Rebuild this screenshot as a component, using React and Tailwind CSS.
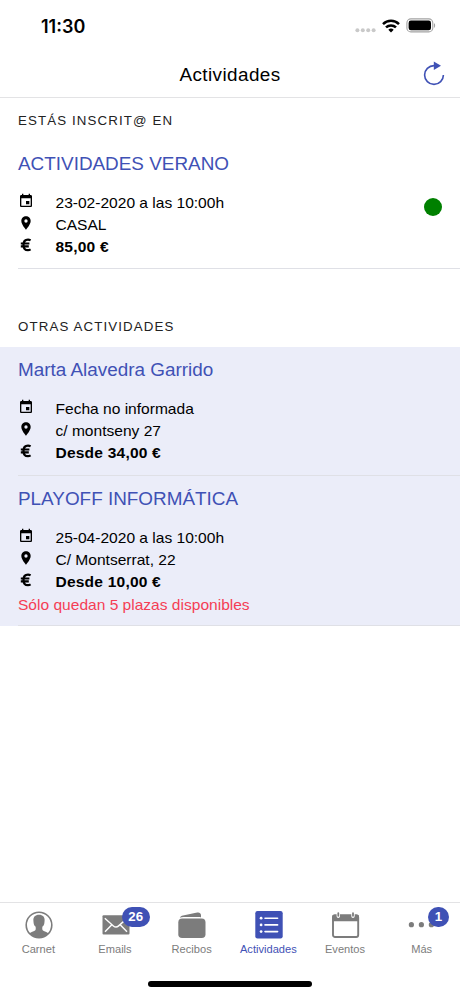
import clsx from 'clsx'

const enrolled = [
  { title: 'ACTIVIDADES VERANO', date: '23-02-2020 a las 10:00h', place: 'CASAL', price: '85,00 €', active: true },
]

const others = [
  { title: 'Marta Alavedra Garrido', date: 'Fecha no informada', place: 'c/ montseny 27', price: 'Desde 34,00 €' },
  {
    title: 'PLAYOFF INFORMÁTICA',
    date: '25-04-2020 a las 10:00h',
    place: 'C/ Montserrat, 22',
    price: 'Desde 10,00 €',
    warning: 'Sólo quedan 5 plazas disponibles',
  },
]

const tabs = [
  { label: 'Carnet', Icon: ContactIcon },
  { label: 'Emails', Icon: MailIcon, badge: '26' },
  { label: 'Recibos', Icon: WalletIcon },
  { label: 'Actividades', Icon: ListIcon, selected: true },
  { label: 'Eventos', Icon: CalendarIcon },
  { label: 'Más', Icon: MoreIcon, badge: '1' },
]

function ContactIcon() {
  return (
    <svg width="28" height="28" viewBox="0 0 28 28">
      <circle cx="14" cy="14" r="12.8" fill="none" stroke="currentColor" strokeWidth="1.6" />
      <path
        d="M14 3.8c-3.8 0-5.9 2.3-5.6 5.8.1 1.2.1 1.9.3 2.8.3 1.5 1 2.5 1.8 3.2.3 1 .4 2.2.1 3.1-.6 1.5-3.9 1.7-6.1 3.7A13 13 0 0 0 14 27a13 13 0 0 0 9.5-4.6c-2.2-2-5.5-2.2-6.1-3.7-.3-.9-.2-2.1.1-3.1.8-.7 1.5-1.7 1.8-3.2.2-.9.2-1.6.3-2.8.3-3.5-1.8-5.8-5.6-5.8z"
        fill="currentColor"
      />
    </svg>
  )
}

function MailIcon() {
  return (
    <svg width="28" height="28" viewBox="0 0 28 28">
      <rect x="0.5" y="4.3" width="27" height="19.2" rx="1" fill="currentColor" />
      <path
        d="M2.8 7.2l8.6 7.7c1.6 1.4 3.6 1.4 5.2 0l8.6-7.7M3 20.8l6.6-6.9M25 20.8l-6.6-6.9"
        fill="none"
        stroke="#fff"
        strokeWidth="1.4"
      />
    </svg>
  )
}

function WalletIcon() {
  return (
    <svg width="28" height="28" viewBox="0 0 28 28" fill="currentColor">
      <rect x="0.3" y="7.6" width="27.2" height="19.4" rx="3.8" />
      <path d="M1.8 6.7c.6-1.3 1.6-2 3.2-2.3l14.2-2.8c2.1-.4 3.6.5 3.8 2.4v2.4c-.5-.3-1.2-.4-2-.4H5.6c-1.5 0-2.7.2-3.8.7z" />
    </svg>
  )
}

function ListIcon() {
  return (
    <svg width="28" height="28" viewBox="0 0 28 28">
      <rect x="0.3" y="0.1" width="27.4" height="27.4" rx="2.2" fill="currentColor" />
      <g fill="#fff">
        <circle cx="6.1" cy="7.2" r="1.4" />
        <circle cx="6.1" cy="13.9" r="1.4" />
        <circle cx="6.1" cy="20.6" r="1.4" />
      </g>
      <path d="M10 7.2h12.6M10 13.9h12.6M10 20.6h12.6" stroke="#fff" strokeWidth="1.6" strokeLinecap="round" />
    </svg>
  )
}

function CalendarIcon() {
  return (
    <svg width="28" height="28" viewBox="0 0 28 28">
      <rect x="1" y="4.4" width="25.2" height="21.6" rx="2" fill="none" stroke="currentColor" strokeWidth="1.9" />
      <path d="M.2 10.3V5.8c0-1.3.8-2.2 2.2-2.2h22.4c1.4 0 2.2.9 2.2 2.2v4.5z" fill="currentColor" />
      <path d="M6.3 1.6v3.6M21 1.6v3.6" stroke="#fff" strokeWidth="3.4" strokeLinecap="round" />
      <path d="M6.3 2.2v2.6M21 2.2v2.6" stroke="currentColor" strokeWidth="1.8" strokeLinecap="round" />
    </svg>
  )
}

function MoreIcon() {
  return (
    <svg width="28" height="28" viewBox="0 0 28 28" fill="currentColor">
      <circle cx="3.4" cy="13.7" r="2.6" />
      <circle cx="13.4" cy="13.7" r="2.6" />
      <circle cx="23.4" cy="13.7" r="2.6" />
    </svg>
  )
}

function EventIcon() {
  return (
    <svg width="16" height="16" viewBox="0 0 24 24" className="-mt-[4px]">
      <path d="M17 12h-5v5h5v-5zM16 1v2H8V1H6v2H5c-1.11 0-2 .9-2 2v14c0 1.1.89 2 2 2h14c1.1 0 2-.9 2-2V5c0-1.1-.9-2-2-2h-1V1h-2zm3 18H5V8h14v11z" />
    </svg>
  )
}

function PinIcon() {
  return (
    <svg width="16" height="16" viewBox="0 0 24 24" className="-mt-[4px]">
      <path d="M12 2C8.13 2 5 5.13 5 9c0 5.25 7 13 7 13s7-7.75 7-13c0-3.87-3.13-7-7-7zm0 9.5a2.5 2.5 0 1 1 0-5 2.5 2.5 0 0 1 0 5z" />
    </svg>
  )
}

function EuroIcon() {
  return (
    <svg width="16" height="16" viewBox="0 0 16 16" className="-mt-[4px]">
      <path
        d="M12.6 3.4c-.8-.5-1.7-.8-2.6-.8-2.8 0-4.5 2.1-4.5 5.3s1.7 5.3 4.5 5.3c.9 0 1.8-.3 2.6-.8M2.8 6.5h8.6M2.8 9.4h8"
        fill="none"
        stroke="#000"
        strokeWidth="2.2"
      />
    </svg>
  )
}

function Row({ icon, children }) {
  return (
    <div className="flex h-[22.2px] items-center">
      <span className="flex w-[37.5px] shrink-0">{icon}</span>
      <span>{children}</span>
    </div>
  )
}

function Activity({ item }) {
  return (
    <li className="ml-[18px] border-b border-[#dfe0e6] pt-[11px] pb-[10px] not-last:pb-[11px]">
      <h2 className="mb-[16.5px] text-[18.9px] leading-[23px] text-[#3f51b5]">{item.title}</h2>
      <div className="flex items-start justify-between pr-[18px]">
        <div>
          <Row icon={<EventIcon />}>{item.date}</Row>
          <Row icon={<PinIcon />}>{item.place}</Row>
          <Row icon={<EuroIcon />}>
            <b className="tracking-[0.2px]">{item.price}</b>
          </Row>
        </div>
        {item.active && <span className="mt-[6px] size-[18px] rounded-full bg-[#008000]" />}
      </div>
      {item.warning && <p className="h-[22px] leading-[23px] text-[#f53d55]">{item.warning}</p>}
    </li>
  )
}

function StatusBar() {
  return (
    <div className="flex h-[51px] items-center justify-between pr-[24px] pl-[41px]">
      <span className="pt-px font-['Inter'] text-[18px] font-semibold">11:30</span>
      <div className="flex items-center">
        <svg width="22" height="14" viewBox="0 0 22 14" fill="#c9c9c9" className="mr-[5px]">
          <circle cx="2.4" cy="11.3" r="2" />
          <circle cx="7.8" cy="11.3" r="2" />
          <circle cx="13.2" cy="11.3" r="2" />
          <circle cx="18.6" cy="11.3" r="2" />
        </svg>
        <svg width="18" height="14" viewBox="0 0 18 14" className="mr-[6px]">
          <path d="M1 5.1a11.5 11.5 0 0 1 16 0M4 8.4a7.2 7.2 0 0 1 10 0" fill="none" stroke="#000" strokeWidth="2.5" />
          <path d="M9 13.4l-2.7-2.7a3.9 3.9 0 0 1 5.4 0z" />
        </svg>
        <svg width="30" height="15" viewBox="0 0 30 15">
          <rect x="0.9" y="0.9" width="25.9" height="13" rx="4" fill="none" stroke="#a3a3a3" strokeWidth="1.1" />
          <rect x="2.6" y="2.6" width="22.4" height="9.6" rx="2.3" />
          <path d="M28 5.2c1.5.6 1.5 3.9 0 4.5z" fill="#a3a3a3" />
        </svg>
      </div>
    </div>
  )
}

function SectionTitle({ className, children }) {
  return (
    <h3 className={clsx('pl-[18px] text-[13.3px] leading-[20px] tracking-[1.12px] text-[#222]', className)}>
      {children}
    </h3>
  )
}

export default function App() {
  return (
    <div className="flex h-[996px] w-[460px] flex-col bg-white font-['Liberation_Sans',sans-serif] text-[15.55px] text-black">
      <header className="h-[98px] border-b border-[#e3e3e5]">
        <StatusBar />
        <div className="grid h-[46px] grid-cols-[1fr_auto_1fr] items-center">
          <h1 className="col-start-2 pt-[2px] text-[18.9px] tracking-[0.42px]">Actividades</h1>
          <svg width="24" height="26" viewBox="0 0 24 26" className="mr-[14px] justify-self-end text-[#3f51b5]">
            <path d="M21.4 14a9.4 9.4 0 1 1-9.4-9.4h2" fill="none" stroke="currentColor" strokeWidth="1.6" />
            <path d="M11.8.4l7.2 4.3-7.2 4.4z" fill="currentColor" />
          </svg>
        </div>
      </header>

      <main className="flex-1">
        <SectionTitle className="pt-[13px] pb-[10px]">ESTÁS INSCRIT@ EN</SectionTitle>
        <ul>
          {enrolled.map((item) => (
            <Activity key={item.title} item={item} />
          ))}
        </ul>

        <SectionTitle className="pt-[48px] pb-[10px]">OTRAS ACTIVIDADES</SectionTitle>
        <ul className="bg-[#ebedf9]">
          {others.map((item) => (
            <Activity key={item.title} item={item} />
          ))}
        </ul>
      </main>

      <nav className="grid h-[94px] grid-cols-6 grid-rows-[60px_1fr] border-t border-[#e3e3e5]">
        {tabs.map(({ label, Icon, badge, selected }) => (
          <div
            key={label}
            className={clsx('flex flex-col items-center pt-[8px]', selected ? 'text-[#3f51b5]' : 'text-[#7c7c7c]')}
          >
            <div className="relative ml-[1.5px]">
              <Icon />
              {badge && (
                <span
                  className={clsx(
                    'absolute -top-[4px] flex h-[20px] items-center justify-center rounded-full bg-[#3f51b5] text-[13.3px] font-bold text-white',
                    badge.length > 1 ? 'left-[20px] w-[28px]' : 'left-[19.5px] w-[21px]'
                  )}
                >
                  {badge}
                </span>
              )}
            </div>
            <span className="mt-[2.5px] text-[11.1px] leading-[14px]">{label}</span>
          </div>
        ))}
        <div className="col-span-6 mx-auto mt-[18px] h-[6px] w-[164px] rounded-full bg-black" />
      </nav>
    </div>
  )
}
